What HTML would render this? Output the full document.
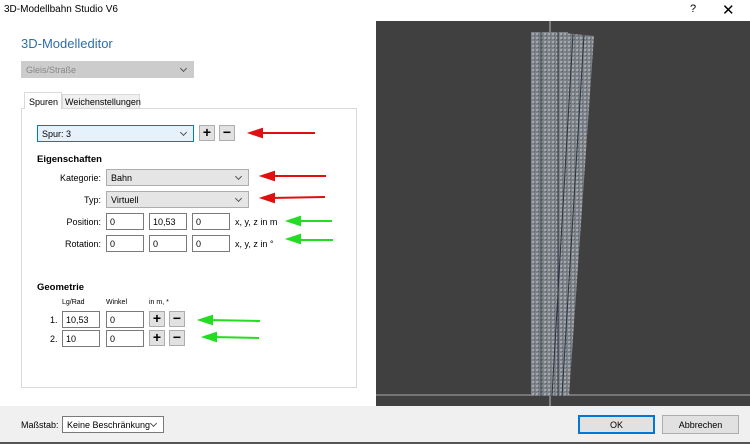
<!DOCTYPE html>
<html><head><meta charset="utf-8"><style>
*{box-sizing:border-box;margin:0;padding:0}
body{width:750px;height:444px;overflow:hidden;background:#fff;font-family:"Liberation Sans",sans-serif;font-size:9px;color:#000;position:relative}
.a{position:absolute}
.sel{position:absolute;border:1px solid #adadad;background:#e5e5e5;padding:3px 0 0 4px;font-size:9px;height:17px}
.sel:after{content:"";position:absolute;right:7px;top:4px;width:4px;height:4px;border-right:1px solid #555;border-bottom:1px solid #555;transform:rotate(45deg)}
.inp{position:absolute;border:1px solid #7a7a7a;background:#fff;height:17px;padding:3px 0 0 3px;font-size:9px}
.btn{position:absolute;width:16px;height:16px;border:1px solid #adadad;background:#e1e1e1;font-weight:bold;font-size:14px;line-height:13px;text-align:center}
.lbl{position:absolute;font-size:9px;text-align:right}
</style></head><body>
<div class="a" style="left:0;top:0;width:750px;height:21px;background:#fff"></div>
<div class="a" style="left:4px;top:4px;font-size:10px">3D-Modellbahn Studio V6</div>
<div class="a" style="left:690px;top:3px;font-size:11px">?</div>
<div class="a" style="left:722px;top:1px;font-size:15px;font-weight:300">✕</div>
<div class="a" style="left:21px;top:36px;font-size:13px;color:#2f6ea8">3D-Modelleditor</div>
<div class="sel" style="left:21px;top:61px;width:173px;color:#888;background:#ccc;border-color:#ccc">Gleis/Straße</div>
<div class="a" style="left:21px;top:108px;width:336px;height:280px;border:1px solid #d9d9d9;background:#fff"></div>
<div class="a" style="left:24px;top:92px;width:38px;height:17px;border:1px solid #d9d9d9;border-bottom:none;background:#fff;padding:4px 0 0 4px">Spuren</div>
<div class="a" style="left:62px;top:94px;width:78px;height:15px;border:1px solid #d9d9d9;background:#f0f0f0;padding:2px 0 0 2px">Weichenstellungen</div>
<div class="sel" style="left:37px;top:125px;width:157px;background:#e5f1fb;border-color:#0078d7">Spur: 3</div>
<div class="btn" style="left:199px;top:125px">+</div>
<div class="btn" style="left:219px;top:125px">−</div>
<div class="a" style="left:37px;top:154px;font-weight:bold;font-size:9.5px">Eigenschaften</div>
<div class="lbl" style="left:40px;width:61px;top:173px">Kategorie:</div>
<div class="sel" style="left:106px;top:169px;width:143px">Bahn</div>
<div class="lbl" style="left:40px;width:61px;top:195px">Typ:</div>
<div class="sel" style="left:106px;top:191px;width:143px">Virtuell</div>
<div class="lbl" style="left:40px;width:61px;top:217px">Position:</div>
<div class="inp" style="left:106px;top:213px;width:38px">0</div>
<div class="inp" style="left:149px;top:213px;width:38px">10,53</div>
<div class="inp" style="left:192px;top:213px;width:38px">0</div>
<div class="a" style="left:235px;top:217px">x, y, z in m</div>
<div class="lbl" style="left:40px;width:61px;top:239px">Rotation:</div>
<div class="inp" style="left:106px;top:235px;width:38px">0</div>
<div class="inp" style="left:149px;top:235px;width:38px">0</div>
<div class="inp" style="left:192px;top:235px;width:38px">0</div>
<div class="a" style="left:235px;top:239px">x, y, z in °</div>
<div class="a" style="left:37px;top:282px;font-weight:bold;font-size:9.5px">Geometrie</div>
<div class="a" style="left:62px;top:299px;font-size:7px">Lg/Rad</div>
<div class="a" style="left:106px;top:299px;font-size:7px">Winkel</div>
<div class="a" style="left:149px;top:299px;font-size:7px">in m, *</div>
<div class="a" style="left:50px;top:315px">1.</div>
<div class="inp" style="left:62px;top:311px;width:38px">10,53</div>
<div class="inp" style="left:106px;top:311px;width:38px">0</div>
<div class="btn" style="left:149px;top:311px">+</div>
<div class="btn" style="left:169px;top:311px">−</div>
<div class="a" style="left:50px;top:334px">2.</div>
<div class="inp" style="left:62px;top:330px;width:38px">10</div>
<div class="inp" style="left:106px;top:330px;width:38px">0</div>
<div class="btn" style="left:149px;top:330px">+</div>
<div class="btn" style="left:169px;top:330px">−</div>
<svg class="a" style="left:0;top:0" width="370" height="400">
<g fill="#e01010" stroke="#e01010" stroke-width="2">
<line x1="258" y1="133" x2="315" y2="133"/><polygon points="250,133 262,129 262,137"/>
<line x1="270" y1="176" x2="326" y2="176"/><polygon points="262,176 274,172 274,180"/>
<line x1="270" y1="198" x2="325" y2="197"/><polygon points="262,198 274,194 274,202"/>
</g>
<g fill="#22dd22" stroke="#22dd22" stroke-width="2">
<line x1="296" y1="221" x2="332" y2="221"/><polygon points="288,221 300,217 300,225"/>
<line x1="296" y1="240" x2="333" y2="240"/><polygon points="288,239 300,235 300,243"/>
<line x1="208" y1="320" x2="260" y2="321"/><polygon points="200,320 212,316 212,324"/>
<line x1="212" y1="337" x2="259" y2="338"/><polygon points="204,337 216,333 216,341"/>
</g></svg>
<div class="a" style="left:376px;top:21px;width:374px;height:385px;background:#404040"></div>
<svg class="a" style="left:376px;top:21px" width="374" height="385">
<defs><pattern id="p" width="4" height="4" patternUnits="userSpaceOnUse"><rect width="4" height="4" fill="#7c8188"/><rect x="0" y="0" width="2" height="2" fill="#a3a8ae"/><rect x="2" y="2" width="1" height="1" fill="#5a5f66"/></pattern></defs>
<line x1="174" y1="0" x2="174" y2="385" stroke="#bbb" stroke-width="1"/>
<line x1="0" y1="374" x2="374" y2="374" stroke="#aaa" stroke-width="1"/>
<rect x="155" y="11" width="37" height="364" fill="url(#p)"/>
<polygon points="188,12 218,15 193,375 168,375" fill="url(#p)"/>
<g stroke="#2a3340" stroke-width="1"><line x1="165" y1="11" x2="165" y2="375"/><line x1="182" y1="11" x2="182" y2="375"/><line x1="197" y1="13" x2="176" y2="375"/><line x1="208" y1="14" x2="186" y2="375"/></g>
</svg>
<div class="a" style="left:0;top:406px;width:750px;height:38px;background:#f0f0f0"></div>
<div class="a" style="left:0;top:442px;width:750px;height:2px;background:#555"></div>
<div class="a" style="left:21px;top:420px">Maßstab:</div>
<div class="sel" style="left:62px;top:416px;width:102px;background:#fff;border-color:#7a7a7a">Keine Beschränkung</div>
<div class="a" style="left:578px;top:415px;width:77px;height:19px;border:2px solid #0078d7;background:#e1e1e1;text-align:center;padding-top:3px">OK</div>
<div class="a" style="left:662px;top:415px;width:77px;height:19px;border:1px solid #adadad;background:#e1e1e1;text-align:center;padding-top:4px">Abbrechen</div>
</body></html>
